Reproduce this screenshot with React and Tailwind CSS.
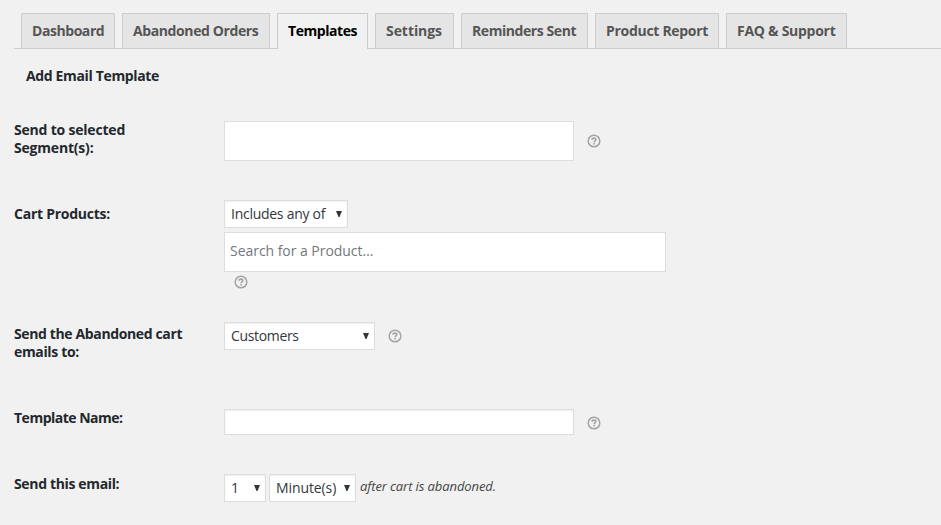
const tabs = [
  { label: 'Dashboard', box: 'w-[94px]', text: 'tracking-[-0.44px]' },
  { label: 'Abandoned Orders', box: 'w-[148px]', text: 'tracking-[-0.39px]' },
  { label: 'Templates', box: 'w-[91px]', text: 'tracking-[-0.44px]', active: true },
  { label: 'Settings', box: 'w-[79px]', text: 'tracking-[-0.06px]' },
  { label: 'Reminders Sent', box: 'w-[127px]', text: 'tracking-[-0.43px]' },
  { label: 'Product Report', box: 'w-[124px]', text: 'tracking-[-0.3px]' },
  { label: 'FAQ & Support', box: 'w-[121px]', text: 'tracking-[-0.27px]' },
];

function Tab({ label, box, text, active }) {
  const look = active
    ? 'h-9 bg-[#f1f1f1] text-black'
    : 'h-[35px] bg-[#e5e5e5] text-[#555]';
  return (
    <a className={`${box} ${look} shrink-0 border border-b-0 border-[#ccc] pl-2.5 pt-[5px] font-bold leading-6 whitespace-nowrap`}>
      <span className={text}>{label}</span>
    </a>
  );
}

function HelpIcon({ className }) {
  return (
    <svg className={`${className} size-[14px] shrink-0`} viewBox="0 0 14 14" fill="none" stroke="#a4a4a4">
      <circle cx="7" cy="7" r="5.8" strokeWidth="1.5" />
      <path d="M5.1 5.7C5.1 4.6 5.9 4.1 7 4.1s1.8.6 1.8 1.5c0 1.2-1.7 1.2-1.7 2.6" strokeWidth="1.6" />
      <path d="M6.3 9.8h1.6" strokeWidth="1.6" />
    </svg>
  );
}

function Select({ label, className, text }) {
  return (
    <div className={`${className} flex h-7 shrink-0 items-center justify-between border border-[#ddd] bg-white pl-1.5 pr-[5px] text-[#32373c] shadow-[inset_0_1px_2px_rgba(0,0,0,0.07)]`}>
      <span className={`${text} whitespace-nowrap`}>{label}</span>
      <svg className="h-[6px] w-[6px]" viewBox="0 0 6 6" fill="#32373c">
        <path d="M0 0h6L3.5 6h-1z" />
      </svg>
    </div>
  );
}

function Row({ lines, className, labelClass = '', children }) {
  return (
    <div className={`${className} flex items-start`}>
      <div className={`${labelClass} w-[210px] shrink-0 font-bold leading-[18px] text-[#23282d]`}>
        {lines.map(([line, text]) => (
          <div key={line}><span className={text}>{line}</span></div>
        ))}
      </div>
      {children}
    </div>
  );
}

export default function App() {
  return (
    <div className="h-[525px] w-[941px] overflow-hidden bg-[#f1f1f1] pl-3.5 pt-[13px] font-['Open_Sans','Noto_Sans',sans-serif] text-sm">
      <nav className="flex h-9 items-start gap-[7px] bg-[linear-gradient(#ccc,#ccc)] bg-[length:100%_1px] bg-bottom bg-no-repeat pl-[7px]">
        {tabs.map((tab) => <Tab key={tab.label} {...tab} />)}
      </nav>
      <h3 className="ml-3 mt-[17px] h-5 font-bold leading-5 text-[#23282d]"><span className="tracking-[-0.35px]">Add Email Template</span></h3>

      <Row className="mt-[35px] h-[79px]" lines={[['Send to selected', 'tracking-[-0.2px]'], ['Segment(s):', 'tracking-[-0.2px]']]}>
        <div className="h-10 w-[350px] border border-[#ddd] bg-white" />
        <HelpIcon className="ml-[13px] mt-[13px]" />
      </Row>

      <Row className="h-[122px]" labelClass="pt-[5px]" lines={[['Cart Products:', 'tracking-[-0.25px]']]}>
        <div>
          <Select className="w-[124px]" label="Includes any of" text="tracking-[-0.27px]" />
          <div className="mt-1 h-10 w-[442px] border border-[#ddd] bg-white pl-[5px] leading-[36px] text-[#72777c]"><span className="tracking-[-0.04px]">Search for a Product…</span></div>
          <HelpIcon className="ml-2.5 mt-[3px]" />
        </div>
      </Row>

      <Row className="h-[87px]" labelClass="pt-[3px]" lines={[['Send the Abandoned cart', 'tracking-[-0.37px]'], ['emails to:', 'tracking-[-0.35px]']]}>
        <Select className="w-[151px]" label="Customers" text="tracking-[-0.34px]" />
        <HelpIcon className="ml-[13px] mt-[7px]" />
      </Row>

      <Row className="h-[65px]" lines={[['Template Name:', 'tracking-[-0.5px]']]}>
        <div className="h-[26px] w-[350px] border border-[#ddd] bg-white shadow-[inset_0_1px_2px_rgba(0,0,0,0.07)]" />
        <HelpIcon className="ml-[13px] mt-[7px]" />
      </Row>

      <Row className="h-[40px]" labelClass="pt-px" lines={[['Send this email:', 'tracking-[-0.35px]']]}>
        <Select className="w-[42px]" label="1" text="" />
        <Select className="ml-[3px] w-[87px]" label="Minute(s)" text="tracking-[-0.1px]" />
        <span className="ml-1 mt-[3px] text-[13px] italic leading-[19px] text-[#444]"><span className="tracking-[-0.1px]">after cart is abandoned.</span></span>
      </Row>
    </div>
  );
}
